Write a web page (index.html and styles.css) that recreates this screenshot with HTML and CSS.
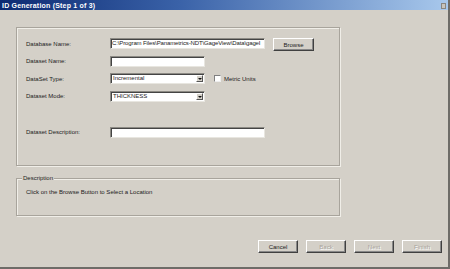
FILE: index.html
```html
<!DOCTYPE html>
<html lang="en">
<head>
    <meta charset="UTF-8">
    <title>ID Generation (Step 1 of 3)</title>
    <link rel="stylesheet" href="styles.css">
</head>
<body>

    <div class="window">
        <div class="titlebar">
            <span class="title">ID Generation (Step 1 of 3)</span>
            <span class="close-btn"></span>
        </div>

        <div class="client">
            <div class="group main-group">
                <div class="row">
                    <label class="lbl">Database Name:</label>
                    <div class="field wide path">C:\Program Files\Panametrics-NDT\GageView\Data\gageI</div>
                    <button class="btn browse-btn">Browse</button>
                </div>
                <div class="row">
                    <label class="lbl">Dataset Name:</label>
                    <div class="field short"></div>
                </div>
                <div class="row">
                    <label class="lbl">DataSet Type:</label>
                    <div class="field short combo">
                        <span class="combo-text">Incremental</span>
                        <span class="combo-arrow"></span>
                    </div>
                    <span class="check"></span>
                    <span class="check-lbl">Metric Units</span>
                </div>
                <div class="row">
                    <label class="lbl">Dataset Mode:</label>
                    <div class="field short combo">
                        <span class="combo-text">THICKNESS</span>
                        <span class="combo-arrow"></span>
                    </div>
                </div>
                <div class="row desc-row">
                    <label class="lbl">Dataset Description:</label>
                    <div class="field wide"></div>
                </div>
            </div>

            <div class="group desc-group">
                <span class="legend">Description</span>
                <p class="desc-text">Click on the Browse Button to Select a Location</p>
            </div>

            <div class="buttons">
                <button class="btn">Cancel</button>
                <button class="btn disabled">Back</button>
                <button class="btn disabled">Next</button>
                <button class="btn disabled">Finish</button>
            </div>
        </div>
    </div>

</body>
</html>
```

FILE: styles.css
```css
body { margin: 0; background: #d4d0c8; font-family: "Liberation Sans", Arial, sans-serif; font-size: 6px; color: #222; }
.window {
    width: 450px; height: 269px; box-sizing: border-box;
    background: #d4d0c8;
    border-right: 2px solid #6e6c68; border-bottom: 2px solid #6e6c68;
    display: flex; flex-direction: column;
}
.titlebar {
    height: 10px; flex: none;
    background: linear-gradient(to right, #0c2a72, #3a62a8 40%, #a8c8ec);
    display: flex; align-items: center; justify-content: space-between;
    padding: 0 2px 0 2px;
}
.title { color: #fff; font-weight: bold; font-size: 7px; letter-spacing: 0.2px; }
.close-btn {
    width: 3px; height: 4px; background: #c8c4bc;
    border: 1px solid #8a8680; margin-top: 1px;
}
.client { flex: 1; padding: 17px 0 0 16px; display: flex; flex-direction: column; }
.group {
    width: 324px; box-sizing: border-box;
    border: 1px solid #a8a49c; box-shadow: inset 1px 1px 0 #f0eee8, 1px 1px 0 #f0eee8;
}
.main-group { height: 139px; padding: 10px 0 0 9px; }
.row { display: flex; align-items: center; height: 11px; margin-bottom: 6.5px; }
.desc-row { margin-top: 25px; }
.lbl { width: 84px; flex: none; }
.field {
    height: 11px; box-sizing: border-box; background: #fff;
    border: 1px solid #8c8a84; border-right-color: #e8e6e0; border-bottom-color: #e8e6e0;
    box-shadow: inset 1px 1px 0 #444;
    font-size: 6px; line-height: 9px; padding-left: 2px; white-space: nowrap; overflow: hidden;
}
.path { letter-spacing: -0.12px; padding-left: 1px; }
.wide { width: 155px; }
.short { width: 95px; }
.combo { display: flex; justify-content: space-between; padding-right: 1px; }
.combo-arrow {
    width: 7px; height: 7px; margin-top: 1px; background: #d4d0c8; flex: none;
    border: 1px solid; border-color: #fff #555 #555 #fff; box-sizing: border-box;
    position: relative;
}
.combo-arrow::after {
    content: ""; position: absolute; left: 1px; top: 2px;
    border-left: 2px solid transparent; border-right: 2px solid transparent; border-top: 2px solid #111;
}
.check {
    width: 7px; height: 7px; margin-left: 9px; background: #fff; flex: none;
    border: 1px solid #808080; border-right-color: #eee; border-bottom-color: #eee;
    box-sizing: border-box;
}
.check-lbl { margin-left: 3px; }
.btn {
    font-family: inherit; font-size: 6px; color: #222;
    width: 40px; height: 13px; padding: 0; background: #d4d0c8;
    border: 1px solid; border-color: #fff #404040 #404040 #fff;
    box-shadow: inset -1px -1px 0 #888;
}
.browse-btn { margin-left: 8px; width: 41px; height: 13px; margin-top: 2px; }
.disabled { color: #a8a49c; text-shadow: 1px 1px 0 #fff; }
.desc-group { position: relative; height: 38px; margin-top: 12px; padding: 0 0 0 9px; }
.legend { position: absolute; left: 5px; top: -4px; background: #d4d0c8; padding: 0 1px; }
.desc-text { margin: 10px 0 0; }
.buttons { display: flex; gap: 8px; justify-content: flex-end; padding-right: 6px; margin-top: 24px; }
```
